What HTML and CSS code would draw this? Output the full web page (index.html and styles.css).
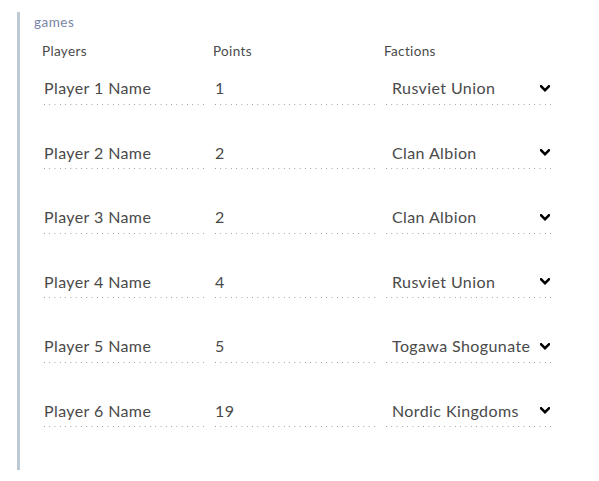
FILE: index.html
```html
<!DOCTYPE html>
<html>
<head>
<meta charset="utf-8">
<link rel="stylesheet" href="styles.css">
</head>
<body>
<div class="panel">
  <div class="legend">games</div>
  <div class="grid">
    <div class="head">Players</div>
    <div class="head">Points</div>
    <div class="head">Factions</div>

    <input class="field" value="Player 1 Name"><input class="field" value="1">
    <div class="sel"><select class="field select"><option>Rusviet Union</option></select><svg class="chev" viewBox="0 0 10 7"><polyline points="1,1.2 5,5.2 9,1.2"/></svg></div>

    <input class="field" value="Player 2 Name"><input class="field" value="2">
    <div class="sel"><select class="field select"><option>Clan Albion</option></select><svg class="chev" viewBox="0 0 10 7"><polyline points="1,1.2 5,5.2 9,1.2"/></svg></div>

    <input class="field" value="Player 3 Name"><input class="field" value="2">
    <div class="sel"><select class="field select"><option>Clan Albion</option></select><svg class="chev" viewBox="0 0 10 7"><polyline points="1,1.2 5,5.2 9,1.2"/></svg></div>

    <input class="field" value="Player 4 Name"><input class="field" value="4">
    <div class="sel"><select class="field select"><option>Rusviet Union</option></select><svg class="chev" viewBox="0 0 10 7"><polyline points="1,1.2 5,5.2 9,1.2"/></svg></div>

    <input class="field" value="Player 5 Name"><input class="field" value="5">
    <div class="sel"><select class="field select"><option>Togawa Shogunate</option></select><svg class="chev" viewBox="0 0 10 7"><polyline points="1,1.2 5,5.2 9,1.2"/></svg></div>

    <input class="field" value="Player 6 Name"><input class="field" value="19">
    <div class="sel"><select class="field select"><option>Nordic Kingdoms</option></select><svg class="chev" viewBox="0 0 10 7"><polyline points="1,1.2 5,5.2 9,1.2"/></svg></div>
  </div>
</div>
</body>
</html>
```
FILE: styles.css
```css
html, body {
  margin: 0;
  padding: 0;
  background: #fff;
}
body {
  font-family: Lato, "Noto Sans", sans-serif;
  color: #3d3d3d;
}
.panel {
  margin: 12px 0 0 17px;
  height: 458px;
  border-left: 3px solid #bdc9d3;
  padding-left: 14px;
  box-sizing: border-box;
  width: 560px;
}
.legend {
  font-size: 13.5px;
  line-height: 18px;
  padding-top: 1px;
  letter-spacing: 0.5px;
  color: #7884a6;
}
.grid {
  margin-left: 8px;
  margin-top: 9px;
  display: grid;
  grid-template-columns: 165px 165px 169px;
  column-gap: 6px;
  row-gap: 32.5px;
}
.head {
  font-size: 13.5px;
  line-height: 18px;
  padding-top: 2px;
  letter-spacing: 0.35px;
  color: #4a4a4a;
  margin-bottom: -20px;
}
.field {
  font-family: Lato, "Noto Sans", sans-serif;
  font-size: 16px;
  letter-spacing: 0.4px;
  color: #4a4a4a;
  height: 32px;
  box-sizing: border-box;
  border: none;
  outline: none;
  margin: 0;
  padding: 0 0 2px 2px;
  width: 100%;
  background-color: transparent;
  background-image: linear-gradient(to right, #999 1px, transparent 1px);
  background-size: 5.3px 1px;
  background-repeat: repeat-x;
  background-position: 2px 100%;
}
.sel {
  position: relative;
}
.select {
  -webkit-appearance: none;
  appearance: none;
  padding-left: 8px;
  border-radius: 0;
}
.chev {
  position: absolute;
  right: 3px;
  top: 12px;
  width: 10px;
  height: 7px;
  pointer-events: none;
}
.chev polyline {
  fill: none;
  stroke: #000;
  stroke-width: 2.4;
  stroke-linecap: square;
}
```
